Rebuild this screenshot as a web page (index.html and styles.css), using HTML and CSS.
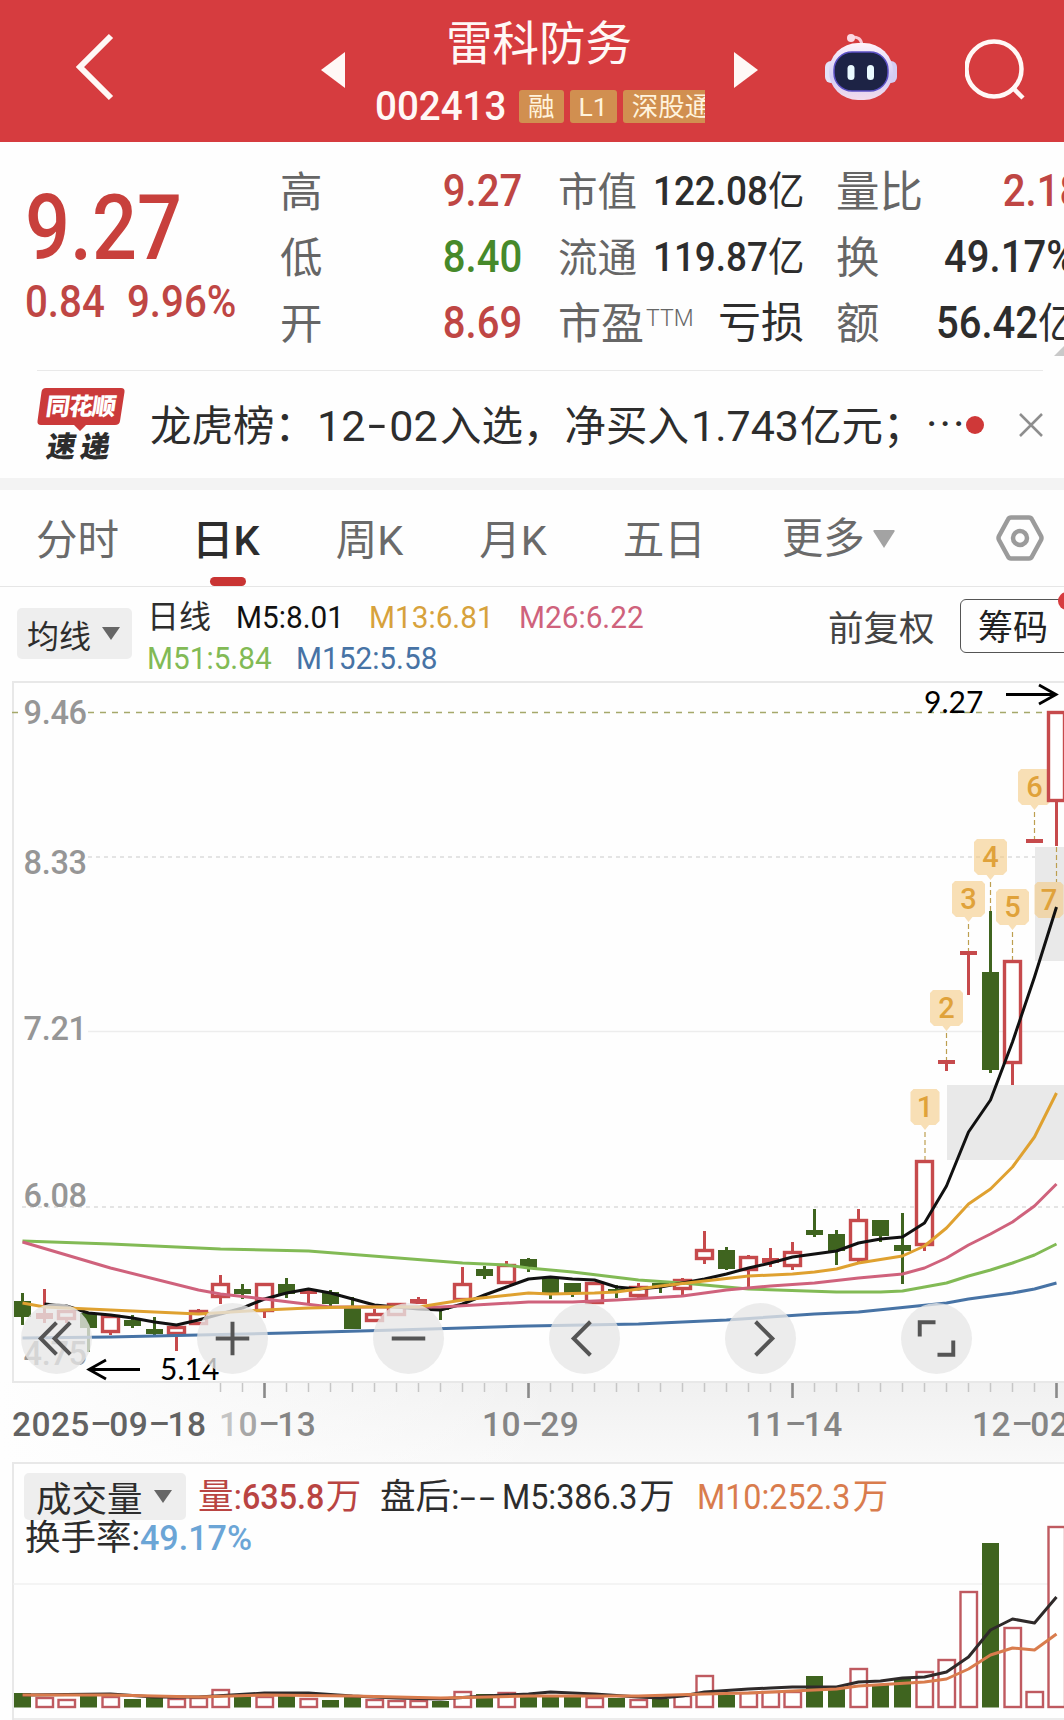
FILE: index.html
```html
<!DOCTYPE html>
<html lang="zh-CN">
<head>
    <meta charset="UTF-8">
    <meta name="viewport" content="width=device-width, initial-scale=1.0">
    <title>雷科防务 002413</title>
    <link rel="stylesheet" href="styles.css">
</head>
<body>
    <header class="topbar">
        <svg class="back" width="40" height="68" viewBox="0 0 40 68"><path d="M36 3 L5 34 L36 65"/></svg>
        <svg class="prev" width="24" height="36" viewBox="0 0 24 36"><path d="M24 0 V36 L0 18 Z"/></svg>
        <div class="stock">
            <h1>雷科防务</h1>
            <div class="stock-meta">
                <span class="code">002413</span>
                <span class="tag">融</span>
                <span class="tag">L1</span>
                <span class="tag">深股通</span>
            </div>
        </div>
        <svg class="next" width="24" height="36" viewBox="0 0 24 36"><path d="M0 0 L24 18 L0 36 Z"/></svg>
        <svg class="robot" width="72" height="68" viewBox="0 0 72 68">
            <defs>
                <linearGradient id="shell" x1="0" y1="0" x2="0" y2="1">
                    <stop offset="0" stop-color="#fff3fa"/>
                    <stop offset="0.6" stop-color="#d3cdf5"/>
                    <stop offset="1" stop-color="#f3dcec"/>
                </linearGradient>
            </defs>
            <path d="M26 4 C34 4 36 6 37 12" fill="none" stroke="#f9c9d6" stroke-width="3"/>
            <circle cx="26" cy="5" r="4" fill="#fbd9e4"/>
            <rect x="0" y="28" width="12" height="22" rx="6" fill="#e4e2f8"/>
            <rect x="60" y="28" width="12" height="22" rx="6" fill="#d4cdf2"/>
            <rect x="4" y="10" width="64" height="57" rx="29" fill="url(#shell)"/>
            <rect x="9" y="19" width="54" height="39" rx="18" fill="#1d2345" stroke="#5b50c4" stroke-width="1.5"/>
            <rect x="22.500" y="32" width="7" height="15" rx="3.500" fill="#eafaff"/>
            <rect x="42" y="32" width="7" height="15" rx="3.500" fill="#eafaff"/>
        </svg>
        <svg class="search" width="62" height="62" viewBox="0 0 62 62"><circle cx="29" cy="30" r="27.500"/><path d="M47 48 L58 59"/></svg>
    </header>

    <section class="quote">
        <div class="price">
            <div class="price-now">9.27</div>
            <div class="price-change"><span>0.84</span><span>9.96%</span></div>
        </div>
        <dl class="stats ohl">
            <dt>高</dt><dd class="up">9.27</dd>
            <dt>低</dt><dd class="down">8.40</dd>
            <dt>开</dt><dd class="up">8.69</dd>
        </dl>
        <dl class="stats cap">
            <dt>市值</dt><dd>122.08<b>亿</b></dd>
            <dt>流通</dt><dd>119.87<b>亿</b></dd>
            <dt class="wide">市盈<sup>TTM</sup></dt><dd><b class="loss">亏损</b></dd>
        </dl>
        <dl class="stats flow">
            <dt>量比</dt><dd class="up">2.18</dd>
            <dt>换</dt><dd class="wide">49.17%</dd>
            <dt>额</dt><dd class="wide">56.42<b>亿</b></dd>
        </dl>
        <svg class="corner" width="10" height="10" viewBox="0 0 10 10"><path d="M0 10 L10 0 V10 Z"/></svg>
    </section>

    <section class="news">
        <div class="news-logo">
            <svg width="88" height="44" viewBox="0 0 88 44"><path d="M9 0 H84 Q88 0 87.500 4 L83 33 Q82.500 37 78 37 H49 L43 43 L37 37 H4 Q0 37 0.500 33 L4.500 4 Q5 0 9 0 Z"/></svg>
            <span class="logo-name">同花顺</span>
            <span class="logo-sub">速递</span>
        </div>
        <p class="headline">龙虎榜：<span class="date">12<i>-</i>02</span>入选，净买入<span class="amount">1.743</span>亿元；</p>
        <span class="dots">···</span>
        <span class="unread"></span>
        <svg class="close" width="24" height="24" viewBox="0 0 24 24"><path d="M1 1 L23 23 M23 1 L1 23"/></svg>
    </section>

    <nav class="tabs">
        <span class="tab first">分时</span>
        <span class="tab active">日K</span>
        <span class="tab">周K</span>
        <span class="tab">月K</span>
        <span class="tab">五日</span>
        <span class="tab more">更多 <svg width="22" height="18" viewBox="0 0 22 18"><path d="M1 0 H21 Q22 0 21.500 1.500 L11 18 L0.500 1.500 Q0 0 1 0 Z"/></svg></span>
        <svg class="settings" width="48" height="46" viewBox="0 0 48 46">
            <path d="M15 2.500 H33 Q35 2.500 36 4.500 L45 21 Q46 23 45 25 L36 41.500 Q35 43.500 33 43.500 H15 Q13 43.500 12 41.500 L3 25 Q2 23 3 21 L12 4.500 Q13 2.500 15 2.500 Z"/>
            <circle cx="24" cy="23" r="7"/>
        </svg>
    </nav>

    <section class="legend">
        <span class="pill">均线 <svg width="18" height="13" viewBox="0 0 18 13"><path d="M0 0 H18 L9 13 Z"/></svg></span>
        <div class="averages">
            <div class="row-a"><span class="name">日线</span><span class="m5">M5:8.01</span><span class="m13">M13:6.81</span><span class="m26">M26:6.22</span></div>
            <div class="row-b"><span class="m51">M51:5.84</span><span class="m152">M152:5.58</span></div>
        </div>
        <span class="adjust">前复权</span>
        <span class="chips">筹码</span>
    </section>

    <section class="kline">
        <svg id="kline" width="1064" height="786" viewBox="0 676 1064 786"></svg>
        <div class="controls">
            <button><svg viewBox="0 0 72 72"><path d="M36 20 L20 36 L36 52 M50 20 L34 36 L50 52"/></svg></button>
            <button><svg viewBox="0 0 72 72"><path d="M36 19 V53 M19 36 H53"/></svg></button>
            <button><svg viewBox="0 0 72 72"><path d="M19 36 H53"/></svg></button>
            <button><svg viewBox="0 0 72 72"><path d="M42 19 L25 36 L42 53"/></svg></button>
            <button><svg viewBox="0 0 72 72"><path d="M31 19 L48 36 L31 53"/></svg></button>
            <button><svg viewBox="0 0 72 72"><path d="M19 34 V19.500 H35 M53 38 V52.500 H37"/></svg></button>
        </div>
    </section>

    <section class="volume">
        <div class="volume-head">
            <span class="pill">成交量 <svg width="18" height="13" viewBox="0 0 18 13"><path d="M0 0 H18 L9 13 Z"/></svg></span>
            <span class="vol">量:<em>635.8</em>万</span>
            <span class="after">盘后:<em class="dash">--</em><em class="m5-vol">M5:386.3</em>万</span>
            <span class="m10"><em>M10:252.3</em>万</span>
        </div>
        <div class="turnover">换手率:<em>49.17%</em></div>
        <svg id="volume" width="1051" height="214" viewBox="13 1506 1051 214"></svg>
    </section>

    <script src="chart.js"></script>
</body>
</html>
```
FILE: styles.css
```css
* {
    box-sizing: border-box;
}
body {
    margin: 0;
    width: 1064px;
    height: 1720px;
    overflow: hidden;
    background: #fefefe;
    color: #2d2d2d;
    font-family: Roboto, "Noto Sans CJK SC", sans-serif;
}
h1, p, dl, dd {
    margin: 0;
}
em, i, b {
    font-style: normal;
    font-weight: inherit;
}
svg {
    display: block;
    flex: none;
}

/* header */
.topbar {
    display: flex;
    align-items: flex-start;
    height: 142px;
    background: #d63c3f;
    color: #fff8f6;
}
.back {
    margin: 33px 0 0 75px;
    fill: none;
    stroke: #fff8f6;
    stroke-width: 6;
}
.prev {
    margin: 52px 0 0 206px;
    fill: #fff8f6;
}
.next {
    margin: 52px 0 0 29px;
    fill: #fff8f6;
}
.robot {
    margin: 33px 0 0 67px;
}
.search {
    margin: 39px 0 0 68px;
    fill: none;
    stroke: #fff8f6;
    stroke-width: 4.5;
}
.stock {
    width: 330px;
    margin-left: 30px;
    overflow: hidden;
}
.stock h1 {
    padding-left: 71px;
    margin-top: 10px;
    font-size: 46.5px;
    line-height: 68px;
    font-weight: 400;
    white-space: nowrap;
}
.stock-meta {
    display: flex;
    align-items: center;
    gap: 6px;
    margin-top: 7px;
    height: 42px;
    white-space: nowrap;
}
.code {
    margin-right: 6px;
    width: 132px;
    font-size: 41px;
    font-weight: 500;
    transform: scaleX(0.94);
    transform-origin: left;
}
.tag {
    flex: none;
    height: 33px;
    padding: 0 9px;
    border-radius: 3px;
    background: #d18f50;
    color: #fff3dd;
    font-size: 26.5px;
    line-height: 33px;
}

/* quote */
.quote {
    display: flex;
    position: relative;
    height: 228px;
    padding: 16px 0 0 25px;
    overflow: hidden;
}
.price {
    flex: none;
    width: 255px;
    color: #c8403c;
}
.price-now {
    margin-top: 23px;
    font-size: 90px;
    line-height: 95px;
    font-weight: 500;
    transform: scaleX(0.88);
    transform-origin: left;
}
.price-change {
    display: flex;
    gap: 24px;
    margin-top: -3px;
    color: #bf4644;
    font-size: 43.5px;
    line-height: 60px;
    font-weight: 500;
    transform: scaleX(0.925);
    transform-origin: left;
}
.stats {
    flex: none;
    display: grid;
    grid-template-columns: 80px 1fr;
    grid-auto-rows: 66px;
    line-height: 67px;
    font-size: 44px;
    white-space: nowrap;
}
.stats dt {
    color: #666;
    font-size: 42.5px;
    line-height: 69px;
}
.stats dd {
    justify-self: end;
    font-weight: 500;
    transform: scaleX(0.91);
    transform-origin: right;
}
.stats dd b {
    font-weight: 400;
    font-size: 42px;
}
.stats .up {
    color: #bf4644;
}
.stats .down {
    color: #46892a;
}
.ohl {
    width: 242px;
}
.cap {
    width: 239px;
    margin-left: 36px;
}
.cap dt {
    font-size: 39.5px;
}
.cap dt.wide {
    font-size: 43px;
}
.cap dt sup {
    position: relative;
    top: -13px;
    font-size: 23px;
    line-height: 0;
    vertical-align: baseline;
    margin-left: 2px;
    font-weight: 300;
}
.cap dd {
    font-size: 40.5px;
}
.cap dd b {
    font-size: 40px;
}
.stats .loss {
    display: inline-block;
    font-size: 43px;
    transform: scaleX(1.1);
    transform-origin: right;
}
.flow {
    width: 246px;
    margin-left: 39px;
}
.flow dt {
    font-size: 43.5px;
}
.flow dd.wide {
    margin-right: 6px;
}
.corner {
    position: absolute;
    right: 0;
    bottom: 14px;
    fill: #c9c9c9;
}

/* news */
.news {
    display: flex;
    align-items: center;
    height: 108px;
    margin-left: 37px;
    width: 1006px;
    border-top: 1px solid #e9e9e9;
}
.news-logo {
    position: relative;
    flex: none;
    width: 88px;
    height: 74px;
    font-weight: 900;
    white-space: nowrap;
}
.news-logo svg {
    fill: #cb3a3a;
}
.logo-name {
    position: absolute;
    left: 9px;
    top: 1px;
    color: #fff;
    font-size: 24px;
    line-height: 36px;
    letter-spacing: -1px;
    transform: skewX(-8deg);
}
.logo-sub {
    position: absolute;
    left: 10px;
    top: 42px;
    font-size: 29px;
    line-height: 34px;
    letter-spacing: 5px;
    transform: skewX(-10deg);
}
.headline {
    flex: none;
    width: 776px;
    margin-left: 25px;
    padding-top: 4px;
    font-size: 41.5px;
    line-height: 60px;
    white-space: nowrap;
}
.headline span {
    display: inline-block;
    font-size: 43px;
}
.date {
    width: 124px;
    padding-left: 1px;
}
.date i {
    display: inline-block;
    margin: 0 2px;
    transform: translateY(-2px) scaleX(1.5);
    width: 20px;
    text-align: center;
}
.amount {
    width: 111px;
    padding-left: 2px;
}
.dots {
    flex: none;
    width: 36px;
    font-size: 44px;
    line-height: 60px;
    letter-spacing: 2px;
}
.unread {
    flex: none;
    width: 18px;
    height: 18px;
    margin-left: 4px;
    border-radius: 50%;
    background: #cf3838;
}
.close {
    margin-left: auto;
    fill: none;
    stroke: #8e8e8e;
    stroke-width: 2.5;
}

/* tabs */
.tabs {
    display: flex;
    align-items: center;
    height: 109px;
    padding: 12px 20px 0 36px;
    border-top: 12px solid #f3f3f3;
    border-bottom: 1px solid #e6e6e6;
    color: #6a6a6a;
    font-size: 41.5px;
    white-space: nowrap;
}
.tab {
    height: 97px;
    line-height: 104px;
    margin-right: 76px;
    margin-top: -13px;
}
.tab.first {
    margin-right: 73px;
}
.tab.active {
    position: relative;
    color: #2d2d2d;
    font-weight: 500;
}
.tab.active::after {
    content: "";
    position: absolute;
    left: 18px;
    bottom: 0;
    width: 36px;
    height: 9px;
    border-radius: 5px;
    background: #c93433;
}
.tab.more {
    display: flex;
    align-items: center;
    gap: 8px;
    margin-right: 0;
    margin-top: -10px;
}
.tab.more svg {
    margin-top: -1px;
    fill: #a3a3a3;
}
.settings {
    margin-left: auto;
    margin-top: -12px;
    fill: none;
    stroke: #9b9b9b;
    stroke-width: 4.5;
}

/* moving averages */
.legend {
    display: flex;
    height: 89px;
    padding-left: 17px;
    white-space: nowrap;
}
.pill {
    display: flex;
    flex: none;
    align-items: center;
    gap: 11px;
    border-radius: 5px;
    background: #eee;
}
.pill svg {
    fill: #666;
}
.legend .pill {
    width: 115px;
    height: 51px;
    margin-top: 21px;
    padding-left: 10px;
    font-size: 32px;
}
.averages {
    flex: none;
    width: 681px;
    margin-left: 15px;
    padding-top: 9px;
    font-size: 32px;
}
.averages div {
    display: grid;
    height: 41px;
    line-height: 42px;
}
.averages .row-a {
    grid-template-columns: 89px 133px 150px 130px;
}
.averages .row-b {
    grid-template-columns: 149px 150px;
}
.averages span {
    transform: scaleX(0.93);
    transform-origin: left;
}
.averages .name {
    transform: none;
}
.m5 { color: #111; }
.m13 { color: #d7a23c; }
.m26 { color: #cf627c; }
.m51 { color: #82ba55; }
.m152 { color: #4773a5; }
.adjust {
    flex: none;
    width: 132px;
    margin-top: 15px;
    font-size: 35.5px;
    line-height: 54px;
    color: #444;
}
.chips {
    position: relative;
    flex: none;
    width: 120px;
    height: 54px;
    margin-top: 12px;
    padding-left: 17px;
    border: 1.5px solid #555;
    border-radius: 6px;
    font-size: 35px;
    line-height: 57px;
    color: #222;
}
.chips::after {
    content: "";
    position: absolute;
    left: 97px;
    top: -8px;
    width: 18px;
    height: 18px;
    border-radius: 50%;
    background: #d63c3f;
}

/* candles */
.kline {
    position: relative;
    height: 786px;
}
.controls {
    position: absolute;
    left: 21px;
    top: 627px;
    display: flex;
    gap: 105px;
}
.controls button {
    width: 71px;
    height: 71px;
    padding: 0;
    border: 0;
    border-radius: 50%;
    background: rgba(231, 231, 231, 0.78);
}
.controls svg {
    width: 71px;
    height: 71px;
    fill: none;
    stroke: #555;
    stroke-width: 4;
}
.price-label {
    fill: #969696;
    font-size: 32.5px;
    font-weight: 500;
    letter-spacing: -0.3px;
}
.note {
    font-family: Lato, sans-serif;
    font-size: 30px;
    fill: #000;
}
.date-label {
    fill: #858585;
    font-size: 33.5px;
    font-weight: 500;
}
.date-label.first {
    fill: #636363;
}
.mark {
    fill: #e0a23a;
    font-size: 29px;
    font-weight: 500;
    text-anchor: middle;
}
.line {
    fill: none;
    stroke-width: 3;
    stroke-linejoin: round;
}

/* volume */
.volume {
    height: 258px;
    margin-left: 12px;
    border-top: 2px solid #e8e8e8;
    border-left: 2px solid #e8e8e8;
    font-size: 35.5px;
    white-space: nowrap;
}
.volume-head {
    display: flex;
    padding: 9px 0 0 10px;
    height: 56px;
}
.volume .pill {
    width: 162px;
    height: 47px;
    padding: 0 0 1px 12px;
    font-size: 35.5px;
}
.volume em {
    display: inline-block;
    transform: scaleX(0.91);
    transform-origin: left;
}
.volume-head span:not(.pill) {
    line-height: 49px;
}
.vol {
    width: 182px;
    margin-left: 12px;
    color: #b94442;
}
.vol em {
    margin-right: -7px;
    font-weight: 500;
}
.after {
    width: 317px;
}
.volume .dash {
    width: 42px;
    letter-spacing: 2.2px;
    transform: scaleX(1.6);
}
.m5-vol {
    margin-right: -11px;
}
.m10 {
    color: #d97c4d;
}
.m10 em {
    margin-right: -13px;
}
.turnover {
    height: 36px;
    padding-left: 11px;
    line-height: 37px;
}
.turnover em {
    color: #6ba5d6;
    font-weight: 500;
    transform: scaleX(0.96);
}
.volume > svg {
    margin: -50px 0 0 -1px;
}
```
FILE: chart.js
```javascript
const RED = '#c64a4c';
const GREEN = '#3f641f';
const STEP = 22;
const x = i => 22.5 + i * STEP;

// [up, body top, body bottom, high, low]
const candles = [
    [0, 1301, 1317, 1293, 1325], [1, 1313, 1319, 1289, 1323], [1, 1310, 1320, 1310, 1323],
    [0, 1313, 1328, 1312, 1352], [1, 1315, 1333, 1315, 1335], [0, 1320, 1326, 1315, 1328],
    [0, 1329, 1334, 1317, 1335], [1, 1326, 1335, 1325, 1351], [1, 1310, 1325, 1309, 1325],
    [1, 1283, 1298, 1275, 1304], [0, 1289, 1294, 1284, 1299], [1, 1283, 1312, 1283, 1318],
    [0, 1284, 1294, 1278, 1298], [1, 1291, 1294, 1288, 1304], [0, 1292, 1304, 1290, 1307],
    [0, 1308, 1329, 1297, 1329], [1, 1313, 1322, 1309, 1322], [1, 1303, 1316, 1303, 1316],
    [1, 1299, 1304, 1297, 1304], [0, 1306, 1310, 1306, 1320], [1, 1283, 1301, 1267, 1301],
    [0, 1269, 1276, 1266, 1279], [1, 1264, 1284, 1261, 1284], [0, 1259, 1268, 1258, 1272],
    [0, 1278, 1293, 1278, 1299], [0, 1283, 1293, 1283, 1297], [1, 1282, 1304, 1282, 1304],
    [0, 1289, 1292, 1285, 1298], [1, 1286, 1297, 1283, 1299], [0, 1283, 1287, 1283, 1293],
    [1, 1279, 1290, 1278, 1297], [1, 1249, 1260, 1231, 1264], [0, 1250, 1269, 1247, 1270],
    [1, 1256, 1271, 1255, 1287], [1, 1258, 1263, 1248, 1267], [1, 1251, 1267, 1242, 1270],
    [0, 1230, 1235, 1209, 1237], [0, 1234, 1251, 1230, 1265], [1, 1219, 1261, 1209, 1263],
    [0, 1220, 1236, 1220, 1242], [0, 1245, 1251, 1213, 1284], [1, 1160, 1246, 1160, 1251],
    [1, 1060, 1064, 1060, 1071], [1, 951, 955, 951, 995], [0, 972, 1070, 911, 1073],
    [1, 960, 1064, 960, 1085], [1, 839, 843, 839, 843], [1, 711, 802, 711, 846]
];

// [index, y] pairs
const averages = {
    '#4773a5': [[0, 1338], [4, 1337], [8, 1335], [12, 1333], [17, 1330], [20, 1328], [23, 1326], [28, 1324], [32, 1320], [36, 1314], [38, 1312], [42, 1303], [43, 1299], [45, 1293], [46, 1289], [47, 1283]],
    '#82ba55': [[0, 1241], [4, 1244], [9, 1249], [13, 1251], [20, 1263], [22, 1265], [23, 1268], [25, 1272], [28, 1280], [30, 1283], [33, 1289], [37, 1292], [39, 1292], [40, 1291], [41, 1287], [42, 1283], [43, 1276], [44, 1270], [45, 1263], [46, 1255], [47, 1244]],
    '#111111': [[1, 1304], [2, 1306], [3, 1313], [4, 1315], [5, 1318], [6, 1322], [7, 1325], [8, 1320], [9, 1314], [10, 1308], [11, 1299], [12, 1293], [13, 1289], [14, 1293], [15, 1299], [16, 1305], [17, 1307], [18, 1309], [19, 1310], [20, 1304], [21, 1295], [22, 1287], [23, 1279], [24, 1277], [25, 1279], [26, 1280], [27, 1287], [28, 1289], [29, 1287], [30, 1283], [31, 1279], [32, 1274], [33, 1268], [34, 1263], [35, 1257], [36, 1254], [37, 1251], [38, 1243], [39, 1239], [40, 1237], [41, 1223], [42, 1186], [43, 1132], [44, 1100], [45, 1042], [46, 977], [47, 907]],
    '#cf627c': [[0, 1242], [4, 1268], [8, 1290], [9, 1294], [11, 1299], [14, 1307], [16, 1307], [19, 1307], [23, 1302], [25, 1302], [27, 1300], [30, 1296], [32, 1290], [34, 1286], [36, 1283], [38, 1278], [40, 1274], [41, 1268], [42, 1258], [43, 1245], [44, 1234], [45, 1222], [46, 1206], [47, 1184]],
    '#dfa130': [[0, 1303], [1, 1307], [4, 1310], [8, 1314], [11, 1310], [13, 1308], [15, 1307], [18, 1307], [20, 1300], [23, 1293], [24, 1294], [26, 1293], [27, 1292], [29, 1286], [31, 1281], [33, 1276], [35, 1274], [36, 1272], [37, 1269], [38, 1263], [40, 1256], [41, 1246], [42, 1228], [43, 1204], [44, 1189], [45, 1167], [46, 1137], [47, 1093]]
};

// [label, x, top, end of leader]
const marks = [
    [1, 925, 1089, 1160], [2, 946.5, 990, 1060], [3, 968.5, 881, 951], [4, 990.5, 839, 911],
    [5, 1012.5, 889, 960], [6, 1034.5, 769, 839], [7, 1049, 882, 0]
];

// [up, top]
const volumes = [
    [0, 1693], [1, 1697], [1, 1699], [0, 1696], [1, 1696], [0, 1699], [0, 1698], [1, 1698],
    [1, 1697], [1, 1689], [0, 1696], [1, 1696], [0, 1695], [1, 1698], [0, 1700], [0, 1697],
    [1, 1699], [1, 1700], [1, 1700], [0, 1701], [1, 1691], [0, 1694], [1, 1692], [0, 1697],
    [0, 1697], [0, 1696], [1, 1697], [0, 1698], [1, 1699], [0, 1699], [1, 1695], [1, 1675],
    [0, 1695], [1, 1692], [1, 1691], [1, 1691], [0, 1676], [0, 1688], [1, 1668], [0, 1684],
    [0, 1678], [1, 1671], [1, 1659], [1, 1591], [0, 1543], [1, 1627], [1, 1691], [1, 1526]
];
const volumeAverages = {
    '#2f2a2a': [[0, 1695], [4, 1694], [6, 1697], [8, 1697], [11, 1693], [13, 1693], [15, 1696], [17, 1698], [19, 1699], [21, 1696], [23, 1694], [24, 1692], [26, 1694], [28, 1697], [29, 1698], [30, 1696], [31, 1692], [33, 1689], [34, 1688], [35, 1687], [37, 1687], [38, 1682], [39, 1681], [40, 1678], [41, 1677], [42, 1672], [43, 1657], [44, 1630], [45, 1619], [46, 1623], [47, 1597]],
    '#d97c4d': [[0, 1695], [4, 1695], [8, 1697], [11, 1695], [15, 1696], [19, 1698], [23, 1696], [28, 1696], [31, 1694], [33, 1693], [35, 1691], [37, 1689], [38, 1686], [41, 1682], [42, 1679], [43, 1669], [44, 1655], [45, 1648], [46, 1650], [47, 1634]]
};

function lines(series) {
    return Object.entries(series).map(([color, points]) =>
        `<polyline class="line" stroke="${color}" points="${points.map(([i, y]) => x(i) + ',' + y).join(' ')}"/>`
    ).join('');
}

function hline(y, from, color, dash) {
    return `<path d="M${from} ${y} H1064" stroke="${color}" stroke-width="1.5" stroke-dasharray="${dash || 'none'}"/>`;
}

function candle([up, top, bottom, high, low], i) {
    const cx = x(i);
    const color = up ? RED : GREEN;
    let out = '';
    if (high < top) out += `<path d="M${cx} ${high} V${top}" stroke="${color}" stroke-width="3"/>`;
    if (low > bottom) out += `<path d="M${cx} ${bottom} V${low}" stroke="${color}" stroke-width="3"/>`;
    if (up && bottom - top > 6) {
        out += `<rect x="${cx - 8}" y="${top + 1.5}" width="16" height="${bottom - top - 3}" fill="#fff" stroke="${color}" stroke-width="3.4"/>`;
    } else {
        out += `<rect x="${cx - 8.5}" y="${top}" width="17" height="${bottom - top}" fill="${color}"/>`;
    }
    return out;
}

function mark([label, cx, y, end]) {
    const w = label === 1 || label === 7 ? 14.5 : 16.5;
    const tip = end ? `L${cx + 4} ${y + 36} L${cx} ${y + 41} L${cx - 4} ${y + 36}` : '';
    const leader = end ? `<path d="M${cx} ${y + 43} V${end}" stroke="#bd9f50" stroke-width="1.2" stroke-dasharray="5 3"/>` : '';
    return leader + `<path d="M${cx - w + 3} ${y} H${cx + w - 3} L${cx + w} ${y + 3} V${y + 32} L${cx + w - 4} ${y + 36} ${tip} H${cx - w + 4} L${cx - w} ${y + 32} V${y + 3} Z" fill="#f4c984" opacity="0.6"/>
        <text class="mark" x="${cx}" y="${y + 28}">${label}</text>`;
}

// dates are set on a fixed pitch, the hyphen takes a full digit
function date(text, left, cls) {
    return [...text].map((ch, i) => {
        const cx = left + i * 19.45;
        if (ch === '-') {
            return `<text class="date-label ${cls}" transform="translate(${cx + 0.5} 1434) scale(1.9 1)">-</text>`;
        }
        const fade = left === 219 && i < 2 ? `opacity="${0.45 + i * 0.25}"` : '';
        return `<text class="date-label ${cls}" x="${cx}" y="1436" ${fade}>${ch}</text>`;
    }).join('');
}

function drawKline() {
    let out = `<defs>
        <linearGradient id="band" x1="0" y1="0" x2="0" y2="1"><stop offset="0" stop-color="#f0f0f0"/><stop offset="1" stop-color="#f9f9f9"/></linearGradient>
        <linearGradient id="fade" x1="0" y1="0" x2="1" y2="0"><stop offset="0" stop-color="#fefefe"/><stop offset="1" stop-color="#fefefe" stop-opacity="0"/></linearGradient>
    </defs>
    <rect x="0" y="1382" width="1064" height="80" fill="url(#band)"/>
    <rect x="0" y="1382" width="560" height="80" fill="url(#fade)"/>
    <path d="M1064 682 H13 V1382 H1064" fill="none" stroke="#e8e8e8" stroke-width="2"/>`;
    out += hline(712.6, 88, '#a5a86a', '6 6') + hline(712.6, 12, '#a5a86a', '6 60 0 2000');
    out += hline(857, 88, '#dcdcdc', '4 4') + hline(1031.5, 88, '#ededed') + hline(1207, 22, '#dcdcdc', '4 4');
    [['9.46', 723.5], ['8.33', 873.5], ['7.21', 1039.5], ['6.08', 1206.5], ['4.75', 1364.5]].forEach(([t, y]) => {
        out += `<text class="price-label" x="23.500" y="${y}">${t}</text>`;
    });
    out += '<rect x="947" y="1085" width="117" height="75" fill="#e9e9e9"/><rect x="1035" y="847" width="29" height="114" fill="#e9e9e9"/>';
    out += '<path d="M1056.500 847 V882" stroke="#bd9f50" stroke-width="1.200" stroke-dasharray="5 3"/>';
    out += marks.map(mark).join('') + candles.map(candle).join('') + lines(averages);
    out += `<text class="note" x="924" y="713">9.27</text><text class="note" x="160" y="1380">5.14</text>
    <path d="M1006 694.500 H1056 M1039 685 L1056 694.500 L1039 704 M140 1369.500 H89 M106 1360 L89 1369.500 L106 1379" fill="none" stroke="#000" stroke-width="2.800"/>`;
    for (let i = 9; i < 48; i++) {
        const major = (i - 11) % 12 === 0;
        out += `<path d="M${x(i)} 1383 V${major ? 1398 : 1392}" stroke="${major ? '#8a8a8a' : '#c6c6c6'}" stroke-width="${major ? 2.6 : 1.5}"/>`;
    }
    out += date('2025-09-18', 12, 'first') + date('10-13', 219, '') + date('10-29', 482, '') + date('11-14', 745.5, '') + date('12-02', 972, '');
    document.getElementById('kline').innerHTML = out;
}

function drawVolume() {
    let out = hline(1584, 13, '#f0f0f0') + hline(1719, 13, '#e6e6e6');
    out += volumes.map(([up, top], i) => up
        ? `<rect x="${x(i) - 8}" y="${top + 1}" width="16.500" height="${1706 - top}" fill="#fff" stroke="#bf5a60" stroke-width="2.400"/>`
        : `<rect x="${x(i) - 8.5}" y="${top}" width="17" height="${1707.5 - top}" fill="${GREEN}"/>`
    ).join('');
    out += lines(volumeAverages);
    document.getElementById('volume').innerHTML = out;
}

drawKline();
drawVolume();
```
